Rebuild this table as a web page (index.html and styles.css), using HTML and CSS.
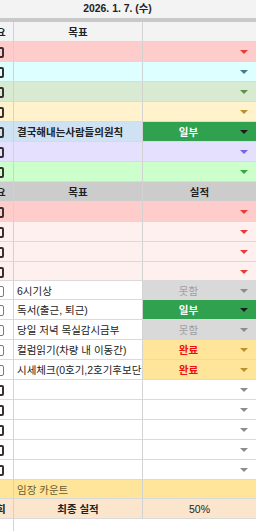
FILE: index.html
```html
<!DOCTYPE html>
<html lang="ko">
<head>
<meta charset="utf-8">
<title>Sheet</title>
<link rel="stylesheet" href="styles.css">
</head>
<body>
<div class="sheet">
  <div class="title">2026. 1. 7. (수)</div>

  <div class="row hdr1">
    <div class="c k"><span class="cut">요</span></div>
    <div class="c g ctr b">목표</div>
    <div class="c v"></div>
  </div>
  <div class="row pink">
    <div class="c k"><span class="cb"></span></div>
    <div class="c g"></div>
    <div class="c v"><i class="tri t-red"></i></div>
  </div>
  <div class="row cyan">
    <div class="c k"><span class="cb"></span></div>
    <div class="c g"></div>
    <div class="c v"><i class="tri t-teal"></i></div>
  </div>
  <div class="row sage">
    <div class="c k"><span class="cb"></span></div>
    <div class="c g"></div>
    <div class="c v"><i class="tri t-sage"></i></div>
  </div>
  <div class="row cream">
    <div class="c k"><span class="cb"></span></div>
    <div class="c g"></div>
    <div class="c v"><i class="tri t-gold"></i></div>
  </div>
  <div class="row sky">
    <div class="c k"><span class="cb"></span></div>
    <div class="c g b">결국해내는사람들의원칙</div>
    <div class="c v chip-green"><span class="lbl">일부</span><i class="tri t-dark"></i></div>
  </div>
  <div class="row lav">
    <div class="c k"><span class="cb"></span></div>
    <div class="c g"></div>
    <div class="c v"><i class="tri t-purple"></i></div>
  </div>
  <div class="row mint">
    <div class="c k"><span class="cb"></span></div>
    <div class="c g"></div>
    <div class="c v"><i class="tri t-green"></i></div>
  </div>

  <div class="row hdr2">
    <div class="c k"><span class="cut">요</span></div>
    <div class="c g ctr b">목표</div>
    <div class="c v ctr b">실적</div>
  </div>
  <div class="row pink">
    <div class="c k"><span class="cb"></span></div>
    <div class="c g"></div>
    <div class="c v"><i class="tri t-red"></i></div>
  </div>
  <div class="row blush">
    <div class="c k"><span class="cb"></span></div>
    <div class="c g"></div>
    <div class="c v"><i class="tri t-red"></i></div>
  </div>
  <div class="row blush">
    <div class="c k"><span class="cb"></span></div>
    <div class="c g"></div>
    <div class="c v"><i class="tri t-red"></i></div>
  </div>
  <div class="row blush short">
    <div class="c k"><span class="cb"></span></div>
    <div class="c g"></div>
    <div class="c v"><i class="tri t-red"></i></div>
  </div>

  <div class="row short">
    <div class="c k"><span class="cb light"></span></div>
    <div class="c g">6시기상</div>
    <div class="c v chip-gray"><span class="lbl">못함</span><i class="tri t-gray"></i></div>
  </div>
  <div class="row">
    <div class="c k"><span class="cb light"></span></div>
    <div class="c g">독서(출근, 퇴근)</div>
    <div class="c v chip-green"><span class="lbl">일부</span><i class="tri t-dark"></i></div>
  </div>
  <div class="row">
    <div class="c k"><span class="cb light"></span></div>
    <div class="c g">당일 저녁 목실감시금부</div>
    <div class="c v chip-gray"><span class="lbl">못함</span><i class="tri t-gray"></i></div>
  </div>
  <div class="row">
    <div class="c k"><span class="cb light"></span></div>
    <div class="c g">컬럼읽기(차량 내 이동간)</div>
    <div class="c v chip-yellow"><span class="lbl">완료</span><i class="tri t-gold"></i></div>
  </div>
  <div class="row">
    <div class="c k"><span class="cb light"></span></div>
    <div class="c g">시세체크(0호기,2호기후보단지)</div>
    <div class="c v chip-yellow"><span class="lbl">완료</span><i class="tri t-gold"></i></div>
  </div>

  <div class="row">
    <div class="c k"><span class="cb"></span></div>
    <div class="c g"></div>
    <div class="c v"><i class="tri t-gray"></i></div>
  </div>
  <div class="row">
    <div class="c k"><span class="cb"></span></div>
    <div class="c g"></div>
    <div class="c v"><i class="tri t-gray"></i></div>
  </div>
  <div class="row">
    <div class="c k"><span class="cb"></span></div>
    <div class="c g"></div>
    <div class="c v"><i class="tri t-gray"></i></div>
  </div>
  <div class="row">
    <div class="c k"><span class="cb"></span></div>
    <div class="c g"></div>
    <div class="c v"><i class="tri t-gray"></i></div>
  </div>
  <div class="row">
    <div class="c k"><span class="cb"></span></div>
    <div class="c g"></div>
    <div class="c v"><i class="tri t-gray"></i></div>
  </div>

  <div class="row yellow short">
    <div class="c k"></div>
    <div class="c g note">임장 카운트</div>
    <div class="c v"></div>
  </div>
  <div class="row peach">
    <div class="c k"><span class="cut">회</span></div>
    <div class="c g ctr b">최종 실적</div>
    <div class="c v ctr">50%</div>
  </div>
  <div class="tail"><div class="c k"></div></div>
</div>
</body>
</html>
```

FILE: styles.css
```css
html, body {
  margin: 0;
  padding: 0;
  background: #ffffff;
}

body {
  width: 256px;
  height: 531px;
  overflow: hidden;
  font-family: "Liberation Sans", "Noto Sans CJK KR", sans-serif;
  font-size: 10.5px;
  color: #222222;
}

.sheet {
  display: flex;
  flex-direction: column;
  width: 256px;
}

.title {
  height: 18px;
  line-height: 18px;
  background: #f3f3f3;
  border-bottom: 4px solid #c9c9c9;
  text-align: center;
  padding-right: 21px;
  font-size: 10.4px;
  font-weight: bold;
  color: #222222;
}

.row {
  display: grid;
  grid-template-columns: 14px 129px 113px;
  height: 20px;
}

.row.short {
  height: 19px;
}

.c {
  box-sizing: border-box;
  display: flex;
  align-items: center;
  overflow: hidden;
  white-space: nowrap;
  border-bottom: 1px solid #dadada;
}

.k,
.g {
  border-right: 1px solid #d2d2d2;
}

.g {
  padding-left: 3px;
}

.v {
  justify-content: flex-end;
}

.ctr {
  justify-content: center;
  padding-left: 0;
}

.b {
  font-weight: bold;
}

.cut {
  margin-left: -4px;
  font-weight: bold;
}

.cb {
  flex-shrink: 0;
  box-sizing: border-box;
  width: 11px;
  height: 11px;
  margin-left: -7px;
  margin-top: 2px;
  border: 2px solid #3a3030;
  border-radius: 2px;
}

.cb.light {
  border: 1.5px solid #7a7a7a;
}

.lbl {
  flex: 1;
  text-align: center;
  margin-right: 6px;
  font-weight: bold;
}

.tri {
  display: block;
  flex-shrink: 0;
  width: 0;
  height: 0;
  margin-right: 8px;
  margin-top: 1px;
  border-left: 4px solid transparent;
  border-right: 4px solid transparent;
  border-top: 4px solid #888888;
}

.t-red { border-top-color: #ea3b35; }
.t-teal { border-top-color: #3f7e8a; }
.t-sage { border-top-color: #5a9448; }
.t-gold { border-top-color: #b8922a; }
.t-purple { border-top-color: #7d5ff0; }
.t-green { border-top-color: #38a83a; }
.t-dark { border-top-color: #1c1c1c; }
.t-gray { border-top-color: #8c8c8c; }

.hdr1 .c { background: #f3f3f3; }
.hdr2 .c { background: #cccccc; }
.pink .c { background: #ffcccc; }
.cyan .c { background: #ddffff; }
.sage .c { background: #d9ead3; }
.cream .c { background: #fff2cc; }
.sky .c { background: #cfe2f3; }
.lav .c { background: #e6e0ff; }
.mint .c { background: #ccffcc; }
.blush .c { background: #fff0f0; }
.yellow .c { background: #ffe599; }
.peach .c { background: #fce5cd; }

.row .chip-green {
  background: #30a14e;
  color: #ffffff;
}

.row .chip-gray {
  background: #d9d9d9;
  color: #9f9f9f;
}

.row .chip-gray .lbl {
  font-weight: normal;
}

.row .chip-yellow {
  background: #ffe599;
  color: #ee1111;
}

.note {
  color: #6b5b2e;
}

.tail {
  display: grid;
  grid-template-columns: 14px;
  height: 12px;
}

.tail .c {
  border-bottom: none;
}
```
